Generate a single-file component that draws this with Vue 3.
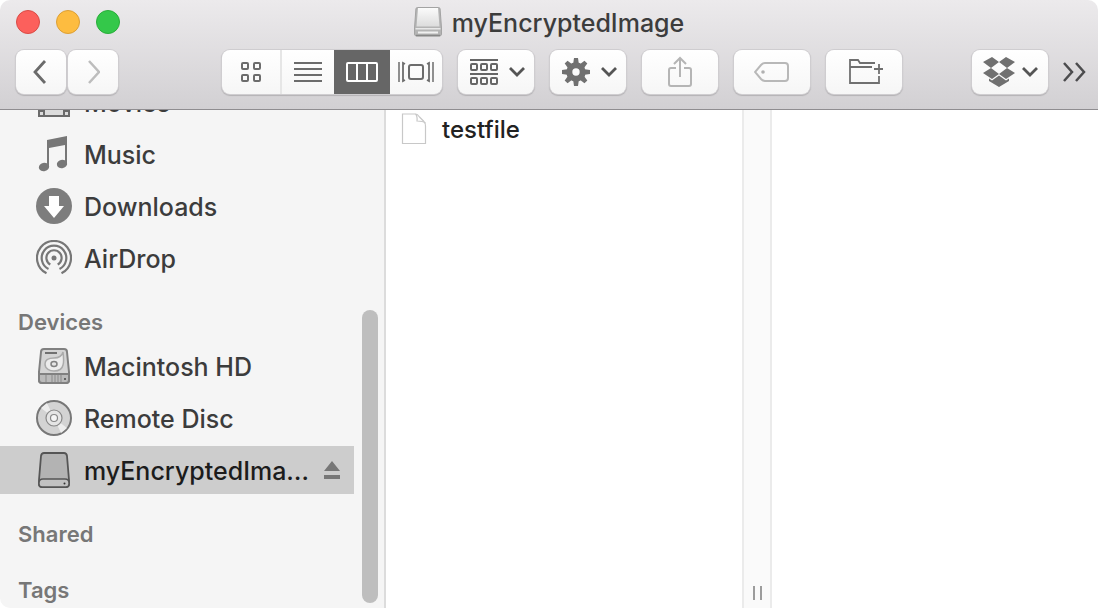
<script setup>
import { ref } from 'vue'

const places = ['Movies', 'Music', 'Downloads', 'AirDrop']
const devices = ['Macintosh HD', 'Remote Disc', 'myEncryptedImage']
const selected = ref('myEncryptedImage')
const view = ref('columns')
const views = ['icons', 'list', 'columns', 'coverflow']
const teeth = [0, 45, 90, 135, 180, 225, 270, 315]
</script>

<template>
  <main class="window">
    <header class="titlebar">
      <div class="title-row">
        <div class="lights">
          <button class="light red" aria-label="Close"></button>
          <button class="light yellow" aria-label="Minimize"></button>
          <button class="light green" aria-label="Zoom"></button>
        </div>
        <h1 class="title">
          <svg width="28" height="32" viewBox="0 0 28 32">
            <defs>
              <linearGradient id="drive" x1="0" y1="0" x2="0" y2="1">
                <stop offset="0" stop-color="#fbfbfb" />
                <stop offset="1" stop-color="#dcdcdc" />
              </linearGradient>
            </defs>
            <path d="M3.500 1.500h21q1.500 0 1.600 1.500l1.400 19v6q0 2-2 2h-23q-2 0-2-2v-6l1.400-19q.1-1.500 1.600-1.500z" fill="#b4b4b4" stroke="#a3a3a3" />
            <path d="M4 2h20l1.500 18.500h-23z" fill="url(#drive)" />
            <path d="M1.500 22h25v1.500h-25z" fill="#e8e8e8" />
            <path d="M4 26.500h20" stroke="#f0f0f0" stroke-width="2" />
            <path d="M2 29.500h24" stroke="#868686" stroke-width="1.500" />
          </svg>
          <span>myEncryptedImage</span>
        </h1>
        <div></div>
      </div>

      <div class="tools">
        <div class="nav">
          <button class="tool" aria-label="Back">
            <svg width="18" height="26" viewBox="0 0 18 26"><path d="M13 2 3 13l10 11" fill="none" stroke="#6b6b6b" stroke-width="2.800" /></svg>
          </button>
          <button class="tool" aria-label="Forward" disabled>
            <svg width="14" height="26" viewBox="0 0 14 26"><path d="M3 2 13 13 3 24" fill="none" stroke="#bdbdbd" stroke-width="2.500" /></svg>
          </button>
        </div>

        <div class="views">
          <button v-for="v in views" :key="v" class="view" :class="[v, { active: view === v }]" :aria-label="v" @click="view = v">
            <svg v-if="v === 'icons'" width="22" height="22" viewBox="0 0 22 22" fill="none" stroke="currentColor" stroke-width="2">
              <rect x="2" y="2" width="6" height="6" rx="1" /><rect x="14" y="2" width="6" height="6" rx="1" />
              <rect x="2" y="14" width="6" height="6" rx="1" /><rect x="14" y="14" width="6" height="6" rx="1" />
            </svg>
            <svg v-else-if="v === 'list'" width="28" height="22" viewBox="0 0 28 22" stroke="currentColor" stroke-width="2">
              <path d="M0 2h28M0 8h28M0 14h28M0 20h28" />
            </svg>
            <svg v-else-if="v === 'columns'" width="32" height="22" viewBox="0 0 32 22" fill="none" stroke="currentColor" stroke-width="2">
              <rect x="1" y="2" width="30" height="18" rx="1" /><path d="M11 2v18M21 2v18" />
            </svg>
            <svg v-else width="36" height="22" viewBox="0 0 36 22" fill="none" stroke="currentColor" stroke-width="2">
              <rect x="11" y="4" width="14" height="14" rx="2" />
              <path d="M1 1v20M35 1v20" stroke-width="1.500" />
              <path d="M7 3 5 2v18l2-1M29 3l2-1v18l-2-1" stroke-width="1.800" />
            </svg>
          </button>
        </div>

        <button class="tool wide menu" aria-label="Arrange">
          <svg width="28" height="28" viewBox="0 0 28 28" fill="none" stroke="#666" stroke-width="2">
            <path d="M0 2h28M0 16h28" />
            <rect x="1" y="6" width="6" height="6" rx="1" /><rect x="11" y="6" width="6" height="6" rx="1" /><rect x="21" y="6" width="6" height="6" rx="1" />
            <rect x="1" y="20" width="6" height="6" rx="1" /><rect x="11" y="20" width="6" height="6" rx="1" /><rect x="21" y="20" width="6" height="6" rx="1" />
          </svg>
          <svg width="16" height="12" viewBox="0 0 16 12"><path d="M1 2l7 7 7-7" fill="none" stroke="#555" stroke-width="2.800" /></svg>
        </button>

        <button class="tool wide menu" aria-label="Action">
          <svg width="28" height="28" viewBox="0 0 28 28" fill="#707070">
            <path v-for="t in teeth" :key="t" d="M12 0h4l1 7h-6z" :transform="`rotate(${t} 14 14)`" />
            <circle cx="14" cy="14" r="6.700" fill="none" stroke="#707070" stroke-width="6" />
          </svg>
          <svg width="16" height="12" viewBox="0 0 16 12"><path d="M1 2l7 7 7-7" fill="none" stroke="#555" stroke-width="2.800" /></svg>
        </button>

        <button class="tool wide" aria-label="Share" disabled>
          <svg width="24" height="32" viewBox="0 0 24 32" fill="none" stroke="#b5b5b5" stroke-width="2">
            <path d="M8 12H3q-2 0-2 2v14q0 2 2 2h18q2 0 2-2V14q0-2-2-2h-5M12 21V2M6 8l6-6 6 6" />
          </svg>
        </button>

        <button class="tool wide" aria-label="Tags" disabled>
          <svg width="36" height="22" viewBox="0 0 36 22" fill="none" stroke="#b8b8b8" stroke-width="2">
            <path d="M11 2h20q3 0 3 3v12q0 3-3 3H11q-2 0-4-2l-6-7 6-7q2-2 4-2z" /><circle cx="9" cy="11" r="1.800" fill="#b0b0b0" stroke="none" />
          </svg>
        </button>

        <button class="tool wide" aria-label="New Folder">
          <svg width="38" height="26" viewBox="-3 0 38 26" fill="none" stroke="#707070" stroke-width="1.800">
            <path d="M27 4H12L10 1H2v23h29v-7M2 8h22M26 10h10M31 5v10" />
          </svg>
        </button>

        <button class="tool wide dropbox" aria-label="Dropbox">
          <svg width="32" height="30" viewBox="0 0 32 30" fill="#707070">
            <path d="M9 0l7 5-8 6-8-6zM23 0l-7 5 8 6 8-6zM0 16l8-5 8 6-7 5zM32 16l-8-5-8 6 7 5zM16 18.500l7 5 3-2v2.500l-10 6-10-6v-2.500l3 2z" />
          </svg>
          <svg width="16" height="12" viewBox="0 0 16 12"><path d="M1 2l7 7 7-7" fill="none" stroke="#555" stroke-width="2.800" /></svg>
        </button>

        <button class="more" aria-label="More">
          <svg width="24" height="20" viewBox="0 0 24 20" fill="none" stroke="#4c4c4e" stroke-width="2.500"><path d="M2 1l8 9-8 9M14 1l8 9-8 9" /></svg>
        </button>
      </div>
    </header>

    <div class="body">
      <aside class="sidebar">
        <nav class="list">
          <ul class="first">
            <li v-for="p in places" :key="p" :class="{ selected: selected === p }">
              <button class="item" @click="selected = p">
                <svg width="36" height="36" viewBox="0 0 36 36">
                  <g v-if="p === 'Movies'" fill="none" stroke="#6b6b6b" stroke-width="2">
                    <path d="M3 4h30v28H3z" fill="#dcdcdc" /><path d="M8 4v28M28 4v28M3 11h5M3 18h5M3 27h5M28 11h5M28 18h5M28 27h5" />
                  </g>
                  <g v-else-if="p === 'Music'" fill="#777">
                    <path d="M11 4 31 0v27h-2V9l-16 3v19h-2z" />
                    <ellipse cx="8" cy="31" rx="5.200" ry="4.200" transform="rotate(-15 8 31)" />
                    <ellipse cx="26" cy="28" rx="5.200" ry="4.200" transform="rotate(-15 26 28)" />
                  </g>
                  <g v-else-if="p === 'Downloads'">
                    <circle cx="18" cy="18" r="18" fill="#7d7d7d" /><path d="M13 8h10v10h5L18 30 8 18h5z" fill="#fff" />
                  </g>
                  <g v-else fill="none" stroke="#777" stroke-width="2.200">
                    <path d="M10.500 33.200A17 17 0 1 1 25.500 33.200M12.500 29A12.300 12.300 0 1 1 23.500 29M14.300 24.500A7.600 7.600 0 1 1 21.700 24.500" />
                    <circle cx="18" cy="18" r="2.500" fill="#777" stroke="none" />
                  </g>
                </svg>
                <span>{{ p }}</span>
              </button>
            </li>
          </ul>

          <h2>Devices</h2>
          <ul>
            <li v-for="d in devices" :key="d" :class="{ selected: selected === d }">
              <button class="item" @click="selected = d">
                <svg width="36" height="36" viewBox="0 0 36 36">
                  <g v-if="d === 'Macintosh HD'" stroke="#808080" stroke-width="2">
                    <path d="M8 1h20q3 0 3 3l2 20v8q0 3-3 3H6q-3 0-3-3v-8L5 4q0-3 3-3z" fill="#d4d4d4" />
                    <path d="M3 26h30v6q0 3-3 3H6q-3 0-3-3z" fill="#bababa" />
                    <path d="M9 5h12" stroke="#707070" />
                    <path d="M27 4c1 8 1 10 0 13-1 5-5 6-9 6s-9-2-9-7 5-6 9-6c5 0 8-2 9-6z" fill="#ececec" stroke="#aaa" stroke-width="1.500" />
                    <ellipse cx="18" cy="16" rx="3" ry="2.500" fill="#e5e5e5" stroke-width="1.500" />
                    <path d="M10 27v7M16 27v7M19 27v7M22 27v7M25 27v7" stroke="#8a8a8a" stroke-width="1" /><circle cx="29" cy="31" r="1" fill="#444" stroke="none" />
                  </g>
                  <g v-else-if="d === 'Remote Disc'" stroke="#777" stroke-width="2">
                    <circle cx="18" cy="18" r="17" fill="#d3d3d3" />
                    <path d="M18 18 5 8l6-5zM18 18l13 10-6 5z" fill="#ededed" stroke="none" />
                    <circle cx="18" cy="18" r="8" fill="#e5e5e5" stroke="#888" stroke-width="1.200" />
                    <circle cx="18" cy="18" r="3.500" fill="#f5f5f5" stroke="#888" stroke-width="1.200" />
                  </g>
                  <g v-else stroke="#555" stroke-width="1.800">
                    <path d="M8 1h20q2.500 0 3 3l2 24v4q0 3-3 3H6q-3 0-3-3v-4L5 4q.5-3 3-3z" fill="#b3b3b3" />
                    <path d="M3 31q0-4 4-4h22q4 0 4 4v1q0 3-3 3H6q-3 0-3-3z" fill="#c2c2c2" stroke-width="1.500" />
                    <circle cx="28.500" cy="31.500" r="1" fill="#333" stroke="none" />
                  </g>
                </svg>
                <span>{{ d }}</span>
              </button>
              <button v-if="d === 'myEncryptedImage'" class="eject" aria-label="Eject">
                <svg width="16" height="18" viewBox="0 0 16 18" fill="#777"><path d="M8 0l8 10H0zM0 14h16v4H0z" /></svg>
              </button>
            </li>
          </ul>

          <h2>Shared</h2>
          <h2>Tags</h2>
        </nav>
        <div class="track"><div class="thumb"></div></div>
      </aside>

      <section class="column">
        <button class="file">
          <svg width="26" height="32" viewBox="0 0 26 32" fill="#fff" stroke="#c8c8c8" stroke-width="1.200">
            <path d="M1.500 1h13q2 0 4 3l4 4q2 2 2 5v17.500h-23z" /><path d="M14.500 1q2 2 1.500 7 6 0 8.500 2" fill="none" />
          </svg>
          <span>testfile</span>
        </button>
      </section>
      <div class="divider"><i></i><i></i></div>
      <section class="preview"></section>
    </div>
  </main>
</template>

<style>
body {
  margin: 0;
  background: #fff;
}
</style>

<style scoped>
.window {
  display: flex;
  flex-direction: column;
  height: 100vh;
  overflow: hidden;
  border-radius: 10px;
  background: #fff;
  color: #3c3c3c;
  font-family: Inter, "Liberation Sans", sans-serif;
  font-size: 25px;
  font-weight: 500;
}
button {
  margin: 0;
  padding: 0;
  border: 0;
  background: none;
  color: inherit;
  font: inherit;
}
svg {
  display: block;
  flex: none;
}
.titlebar {
  flex: none;
  box-sizing: border-box;
  height: 110px;
  border-bottom: 1px solid #8f8d90;
  background: linear-gradient(#eceaec, #d2d0d3);
}
.title-row {
  display: grid;
  grid-template-columns: 1fr auto 1fr;
  align-items: center;
  height: 44px;
  padding: 0 16px;
}
.lights {
  display: flex;
  gap: 16px;
}
.light {
  width: 24px;
  height: 24px;
  border: 1px solid #d94b46;
  border-radius: 50%;
  background: #fc605c;
}
.light.yellow {
  border-color: #dc9f35;
  background: #fdbc40;
}
.light.green {
  border-color: #29ad3a;
  background: #34c84a;
}
.title {
  display: flex;
  align-items: center;
  gap: 10px;
  margin: 0;
  font-size: 25px;
  font-weight: 500;
}
.title span,
.item span,
.file span {
  padding-top: 2px;
}
.tools {
  display: flex;
  align-items: center;
  gap: 16px;
  padding: 6px 12px 0 16px;
}
.nav {
  display: flex;
  gap: 2px;
}
.tool {
  display: flex;
  align-items: center;
  justify-content: center;
  gap: 11px;
  width: 50px;
  height: 44px;
  border-radius: 8px;
  background: linear-gradient(#fff, #f6f6f6);
  box-shadow: 0 0 0 1px #cfcdd0, 0 1px 1px 1px #b4b2b5;
}
.wide {
  width: 76px;
}
.menu {
  padding-left: 3px;
}
.views {
  display: flex;
  width: 220px;
  height: 44px;
  margin-left: 88px;
  overflow: hidden;
  border-radius: 8px;
  background: linear-gradient(#fff, #f6f6f6);
  box-shadow: 0 0 0 1px #cfcdd0, 0 1px 1px 1px #b4b2b5;
}
.view {
  display: flex;
  flex: 1;
  align-items: center;
  justify-content: center;
  color: #6c6c6c;
}
.view.icons {
  flex: 0 0 60px;
  box-sizing: border-box;
  border-right: 2px solid #e6e6e6;
}
.view.columns {
  flex: 0 0 56px;
}
.view.active {
  background: #666;
  color: #fff;
}
.dropbox {
  gap: 7px;
  margin-left: auto;
}
.more {
  margin-left: -2px;
}
.body {
  display: flex;
  flex: 1;
  min-height: 0;
}
.sidebar {
  display: flex;
  flex: none;
  width: 384px;
  overflow: hidden;
  border-right: 2px solid #dcdcdc;
  background: #f5f5f5;
}
.list {
  flex: 1;
  min-width: 0;
}
ul {
  margin: 0;
  padding: 0;
  list-style: none;
}
.first {
  margin-top: -33px;
}
li {
  display: flex;
  align-items: center;
  height: 48px;
  padding: 1px 0 3px;
}
li.selected {
  margin: 1px 0 3px;
  padding: 0;
  background: #cdcdcd;
  color: #1c1c1c;
}
.item {
  display: flex;
  flex: 1;
  align-items: center;
  gap: 12px;
  min-width: 0;
  padding-left: 36px;
  line-height: 36px;
  text-align: left;
}
.item span {
  overflow: hidden;
  text-overflow: ellipsis;
  white-space: nowrap;
}
.eject {
  margin: 0 14px 0 12px;
}
h2 {
  height: 38px;
  margin: 0;
  padding: 18px 0 0 18px;
  color: #777;
  font-size: 22px;
  font-weight: 600;
  line-height: 38px;
}
.track {
  display: flex;
  flex: none;
  width: 22px;
  padding: 200px 0 5px 8px;
}
.thumb {
  width: 16px;
  border-radius: 8px;
  background: #bebebe;
}
.column {
  flex: none;
  width: 356px;
}
.file {
  display: flex;
  align-items: center;
  gap: 15px;
  width: 100%;
  height: 37px;
  padding-left: 15px;
  color: #222;
  font-size: 24px;
  text-align: left;
}
.divider {
  display: flex;
  flex: none;
  align-items: flex-end;
  justify-content: center;
  gap: 5px;
  box-sizing: border-box;
  width: 30px;
  padding-bottom: 8px;
  border: solid #ebebeb;
  border-width: 0 2px;
  background: #fafafa;
}
.divider i {
  width: 2px;
  height: 14px;
  background: #9c9c9c;
}
.preview {
  flex: 1;
}
</style>
